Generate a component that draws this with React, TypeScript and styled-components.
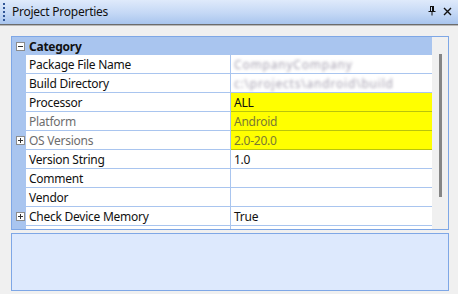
import { FC } from "react";
import styled, { createGlobalStyle } from "styled-components";

const GlobalStyle = createGlobalStyle`
  html, body {
    margin: 0;
    padding: 0;
    background: #f0f0f0;
  }
  body {
    font-family: "Noto Sans", "Liberation Sans", sans-serif;
    font-size: 12px;
    letter-spacing: -0.25px;
  }
`;

type Row = {
  name: string;
  value?: string;
  blurred?: boolean;
  disabled?: boolean;
  highlight?: boolean;
  expandable?: boolean;
};

const rows: Row[] = [
  { name: "Package File Name", value: "CompanyCompany", blurred: true },
  { name: "Build Directory", value: "c:\\projects\\android\\build", blurred: true },
  { name: "Processor", value: "ALL", highlight: true },
  { name: "Platform", value: "Android", disabled: true, highlight: true },
  { name: "OS Versions", value: "2.0-20.0", disabled: true, highlight: true, expandable: true },
  { name: "Version String", value: "1.0" },
  { name: "Comment" },
  { name: "Vendor" },
  { name: "Check Device Memory", value: "True", expandable: true },
  { name: "" },
];

const Toggle: FC<{ open?: boolean }> = ({ open }) => (
  <svg width="9" height="9" viewBox="0 0 9 9">
    <rect x="0.5" y="0.5" width="8" height="8" fill="#fff" stroke="#8c8c8c" />
    <line x1="2" y1="4.5" x2="7" y2="4.5" stroke="#333" />
    {!open && <line x1="4.5" y1="2" x2="4.5" y2="7" stroke="#333" />}
  </svg>
);

const App: FC = () => {
  return (
    <Window>
      <GlobalStyle />
      <TitleBar>
        <Grip />
        <Title>Project Properties</Title>
        <TitleButtons>
          <svg width="8" height="10" viewBox="0 0 8 10">
            <path d="M2 0.5h4M2.5 0.5v5M5.5 0.5v5M0.5 5.5h7M4 5.5v4" stroke="#111" fill="none" />
            <path d="M4.5 1v4" stroke="#111" />
          </svg>
          <svg width="9" height="9" viewBox="0 0 9 9">
            <path d="M1 1l7 7M8 1l-7 7" stroke="#111" strokeWidth="1.4" fill="none" />
          </svg>
        </TitleButtons>
      </TitleBar>
      <Body>
        <Grid>
          <Rows>
            <CategoryRow>
              <ToggleCell>
                <Toggle open />
              </ToggleCell>
              <CategoryName>Category</CategoryName>
            </CategoryRow>
            {rows.map((r, i) => (
              <PropRow key={i}>
                <ToggleCell>{r.expandable && <Toggle />}</ToggleCell>
                <NameCell $disabled={r.disabled}>{r.name}</NameCell>
                <ValueCell $highlight={r.highlight} $disabled={r.disabled}>
                  {r.blurred ? <Blur>{r.value}</Blur> : r.value}
                </ValueCell>
              </PropRow>
            ))}
          </Rows>
          <ScrollBar>
            <Thumb />
          </ScrollBar>
        </Grid>
        <Description />
      </Body>
    </Window>
  );
};

export default App;

const Window = styled.div`
  width: 458px;
  height: 294px;
  display: flex;
  flex-direction: column;
  overflow: hidden;
`;

const TitleBar = styled.div`
  height: 24px;
  flex: none;
  display: flex;
  align-items: center;
  background: linear-gradient(#dfeafb, #c4d8f5 55%, #a9c5ee);
  border-bottom: 1px solid #6c6c6c;
  box-shadow: 0 1px 0 #b9b9b9;
`;

const Grip = styled.div`
  width: 0;
  height: 18px;
  margin: 0 7px 0 3px;
  border-left: 2px dotted #2f5597;
`;

const Title = styled.span`
  flex: 1;
  color: #111;
  font-size: 12px;
  padding-bottom: 1px;
`;

const TitleButtons = styled.div`
  display: flex;
  align-items: center;
  gap: 7px;
  padding-right: 6px;
  padding-bottom: 2px;
`;

const Body = styled.div`
  flex: 1;
  display: flex;
  flex-direction: column;
  gap: 3px;
  padding: 11px 9px 3px 11px;
`;

const Grid = styled.div`
  height: 192px;
  flex: none;
  display: flex;
  border: 1px solid #7ea7e6;
  background: #f0f0f0;
  overflow: hidden;
`;

const Rows = styled.div`
  width: 420px;
  display: flex;
  flex-direction: column;
  background: #a9c5ef;
`;

const CategoryRow = styled.div`
  height: 18px;
  flex: none;
  display: flex;
  align-items: center;
`;

const ToggleCell = styled.div`
  width: 14px;
  flex: none;
  display: flex;
  align-items: center;
  justify-content: center;
  padding-left: 1px;
`;

const CategoryName = styled.span`
  font-weight: bold;
  color: #111;
  padding-left: 2px;
`;

const PropRow = styled.div`
  height: 19px;
  flex: none;
  display: grid;
  grid-template-columns: 14px 205px 1fr;
`;

const NameCell = styled.div<{ $disabled?: boolean }>`
  background: #fff;
  border-bottom: 1px solid #a9c5ef;
  border-right: 1px solid #a9c5ef;
  padding: 1px 0 0 3px;
  line-height: 17px;
  white-space: nowrap;
  overflow: hidden;
  color: ${(p) => (p.$disabled ? "#6d6d6d" : "#111")};
`;

const ValueCell = styled.div<{ $highlight?: boolean; $disabled?: boolean }>`
  background: ${(p) => (p.$highlight ? "#ffff00" : "#fff")};
  border-bottom: 1px solid ${(p) => (p.$highlight ? "#b9c40c" : "#a9c5ef")};
  padding: 1px 0 0 3px;
  line-height: 17px;
  white-space: nowrap;
  overflow: hidden;
  color: ${(p) => (p.$disabled ? "#7a7a32" : "#111")};
`;

const Blur = styled.span`
  display: inline-block;
  filter: blur(1.4px);
  color: #8d879b;
  opacity: 0.8;
  letter-spacing: 0.8px;
`;

const ScrollBar = styled.div`
  flex: 1;
  display: flex;
  justify-content: center;
  padding-top: 17px;
`;

const Thumb = styled.div`
  width: 3px;
  height: 143px;
  background: #858585;
`;

const Description = styled.div`
  height: 56px;
  flex: none;
  background: #dde9fd;
  border: 1px solid #7ea7e6;
`;
